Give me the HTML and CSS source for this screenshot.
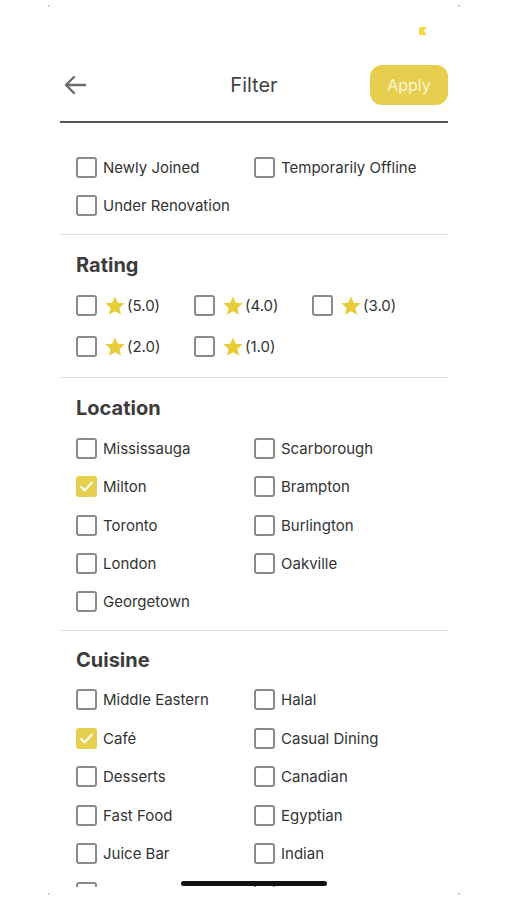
FILE: index.html
```html
<!DOCTYPE html>
<html lang="en">
<head>
<meta charset="utf-8">
<title>Filter</title>
<link rel="stylesheet" href="styles.css">
</head>
<body>
<div class="screen">
  <span class="corner tl"></span><span class="corner tr"></span>
  <span class="corner bl"></span><span class="corner br"></span>
  <div class="status"><span class="status-mark"></span></div>
  <main class="page">
    <header class="header">
      <button class="back" aria-label="Back">
        <svg width="24" height="20" viewBox="0 0 24 20"><path d="M22 10H3M11 2L3 10l8 8" fill="none" stroke="#6b6b6b" stroke-width="2.4" stroke-linecap="round" stroke-linejoin="round"/></svg>
      </button>
      <h1 class="title">Filter</h1>
      <button class="apply">Apply</button>
    </header>
    <div class="header-line"></div>

    <section class="section first">
      <div class="grid two">
        <label class="opt"><span class="box"></span>Newly Joined</label>
        <label class="opt"><span class="box"></span>Temporarily Offline</label>
        <label class="opt"><span class="box"></span>Under Renovation</label>
      </div>
    </section>

    <section class="section rating-sec">
      <h2 class="heading">Rating</h2>
      <div class="grid three">
        <label class="opt"><span class="box"></span><svg class="star" viewBox="0 0 24 24"><path d="M12 1.5l3.1 6.9 7.4.7-5.6 5 1.7 7.4L12 17.6l-6.6 3.9 1.7-7.4-5.6-5 7.4-.7z"/></svg><span class="val">(5.0)</span></label>
        <label class="opt"><span class="box"></span><svg class="star" viewBox="0 0 24 24"><path d="M12 1.5l3.1 6.9 7.4.7-5.6 5 1.7 7.4L12 17.6l-6.6 3.9 1.7-7.4-5.6-5 7.4-.7z"/></svg><span class="val">(4.0)</span></label>
        <label class="opt"><span class="box"></span><svg class="star" viewBox="0 0 24 24"><path d="M12 1.5l3.1 6.9 7.4.7-5.6 5 1.7 7.4L12 17.6l-6.6 3.9 1.7-7.4-5.6-5 7.4-.7z"/></svg><span class="val">(3.0)</span></label>
        <label class="opt"><span class="box"></span><svg class="star" viewBox="0 0 24 24"><path d="M12 1.5l3.1 6.9 7.4.7-5.6 5 1.7 7.4L12 17.6l-6.6 3.9 1.7-7.4-5.6-5 7.4-.7z"/></svg><span class="val">(2.0)</span></label>
        <label class="opt"><span class="box"></span><svg class="star" viewBox="0 0 24 24"><path d="M12 1.5l3.1 6.9 7.4.7-5.6 5 1.7 7.4L12 17.6l-6.6 3.9 1.7-7.4-5.6-5 7.4-.7z"/></svg><span class="val">(1.0)</span></label>
      </div>
    </section>

    <section class="section location-sec">
      <h2 class="heading">Location</h2>
      <div class="grid two">
        <label class="opt"><span class="box"></span>Mississauga</label>
        <label class="opt"><span class="box"></span>Scarborough</label>
        <label class="opt"><span class="box checked"><svg viewBox="0 0 20 20"><path d="M4.5 10.5l3.6 3.6L15.5 6" fill="none" stroke="#fff" stroke-width="2.2" stroke-linecap="round" stroke-linejoin="round"/></svg></span>Milton</label>
        <label class="opt"><span class="box"></span>Brampton</label>
        <label class="opt"><span class="box"></span>Toronto</label>
        <label class="opt"><span class="box"></span>Burlington</label>
        <label class="opt"><span class="box"></span>London</label>
        <label class="opt"><span class="box"></span>Oakville</label>
        <label class="opt"><span class="box"></span>Georgetown</label>
      </div>
    </section>

    <section class="section cuisine-sec">
      <h2 class="heading">Cuisine</h2>
      <div class="grid two">
        <label class="opt"><span class="box"></span>Middle Eastern</label>
        <label class="opt"><span class="box"></span>Halal</label>
        <label class="opt"><span class="box checked"><svg viewBox="0 0 20 20"><path d="M4.5 10.5l3.6 3.6L15.5 6" fill="none" stroke="#fff" stroke-width="2.2" stroke-linecap="round" stroke-linejoin="round"/></svg></span>Café</label>
        <label class="opt"><span class="box"></span>Casual Dining</label>
        <label class="opt"><span class="box"></span>Desserts</label>
        <label class="opt"><span class="box"></span>Canadian</label>
        <label class="opt"><span class="box"></span>Fast Food</label>
        <label class="opt"><span class="box"></span>Egyptian</label>
        <label class="opt"><span class="box"></span>Juice Bar</label>
        <label class="opt"><span class="box"></span>Indian</label>
        <span class="opt"><span class="box"></span></span>
        <span class="opt"><span class="box"></span></span>
      </div>
    </section>
  </main>
  <div class="home-indicator"></div>
</div>
</body>
</html>
```

FILE: styles.css
```css
* { box-sizing: border-box; }
html, body { margin: 0; padding: 0; background: #fff; }
body {
  font-family: Inter, "Noto Sans", "Liberation Sans", sans-serif;
  color: #333;
}
.screen {
  position: relative;
  width: 507px;
  height: 900px;
  overflow: hidden;
}
.corner {
  position: absolute;
  width: 2px; height: 2px;
  border-radius: 50%;
  background: #bdbdbd;
}
.corner.tl { left: 48px; top: 5px; }
.corner.tr { left: 458px; top: 5px; }
.corner.bl { left: 48px; top: 893px; }
.corner.br { left: 458px; top: 893px; }

.status { height: 65px; position: relative; }
.status-mark {
  position: absolute;
  left: 419px; top: 27px;
  width: 8px; height: 8px;
  background: #f0d64a;
  border-radius: 1px;
  clip-path: polygon(0 0, 100% 0, 60% 50%, 100% 100%, 0 100%);
}

.page {
  height: 822px;
  overflow: hidden;
  padding: 0 59px 0 60px;
}
.header {
  height: 40px;
  display: flex;
  align-items: center;
  justify-content: space-between;
  position: relative;
}
.back {
  border: 0; background: none; padding: 0;
  margin-left: 3px;
  width: 24px; height: 20px;
  display: flex;
}
.title {
  position: absolute;
  left: 0; right: 0;
  text-align: center;
  margin: 0;
  font-size: 20px;
  font-weight: 400;
  color: #444;
  pointer-events: none;
}
.apply {
  width: 78px; height: 40px;
  border: 0;
  border-radius: 12px;
  background: #e6cf4e;
  color: #fdf6d8;
  font-family: inherit;
  font-size: 16px;
}
.header-line {
  margin-top: 16px;
  height: 2px;
  background: #555;
}

.section {
  padding: 18px 16px 18px;
  border-bottom: 1px solid #dedede;
}
.section.first { padding-top: 34px; }
.rating-sec { padding-bottom: 20px; }
.location-sec { padding-bottom: 18px; }
.cuisine-sec { padding-top: 17px; border-bottom: 0; }
.heading {
  margin: 0 0 18px;
  font-size: 20px;
  line-height: 24px;
  font-weight: 700;
  color: #3c3c3c;
}
.rating-sec .heading { margin-bottom: 19px; }
.location-sec .heading { margin-bottom: 19px; }
.cuisine-sec .heading { margin-bottom: 18px; }
.grid {
  display: grid;
  row-gap: 18.5px;
}
.grid.two { grid-template-columns: 178px 1fr; }
.location-sec .grid { row-gap: 18.25px; }
.grid.three { grid-template-columns: 118px 118px 1fr; row-gap: 21px; }
.opt {
  display: flex;
  align-items: center;
  height: 20px;
  font-size: 15px;
  color: #333;
  white-space: nowrap;
}
.box {
  width: 21px; height: 21px;
  border: 2px solid #8a8a8a;
  border-radius: 3px;
  margin-right: 6px;
  flex: none;
  display: flex;
  align-items: center;
  justify-content: center;
}
.box.checked {
  border-color: #e6cf4e;
  background: #e6cf4e;
}
.box.checked svg { width: 19px; height: 19px; flex: none; }
.star {
  width: 22px; height: 22px;
  fill: #e8cd3a;
  margin-left: 1px;
  margin-right: 1px;
}
.val { font-size: 15px; }

.home-indicator {
  position: absolute;
  left: 181px; top: 881px;
  width: 146px; height: 5px;
  border-radius: 3px;
  background: #111;
}
```
